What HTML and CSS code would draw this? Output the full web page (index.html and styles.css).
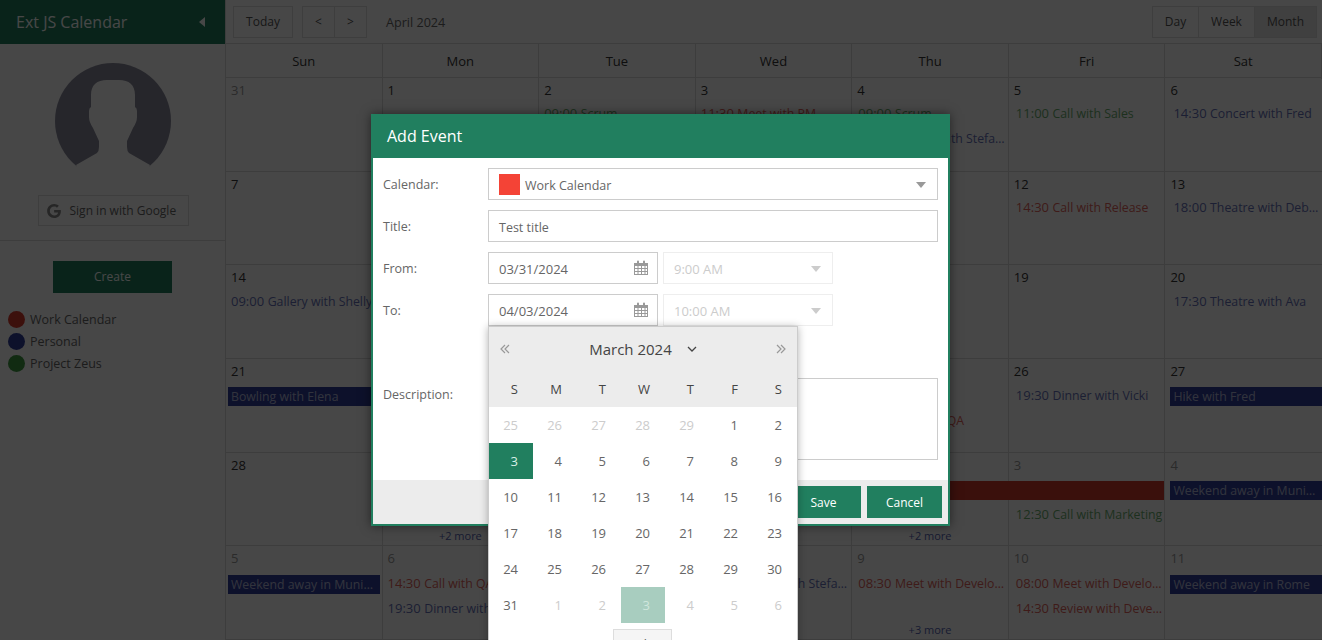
FILE: index.html

```html
<!DOCTYPE html>
<html>
<head>
<title>Ext JS Calendar</title>
<meta name="viewport" content="width=device-width, initial-scale=1">
<link rel="stylesheet" href="styles.css">
</head>
<body>
<div class="app">
  <aside class="sidebar">
    <div class="brand">
      <span>Ext JS Calendar</span>
      <i class="collapse"></i>
    </div>
    <div class="profile">
      <svg class="avatar" viewBox="0 0 116 116" width="116" height="116">
        <circle cx="58" cy="58" r="58" fill="#8a8a9c"/>
        <path fill="#fff" d="M21 102L42 90Q44 88 44 84V78L38 65Q34 59 34 54V48Q34 45 36 44V32C36 22 42 17 52 17H64C74 17 80 22 80 32V44Q82 45 82 48V54Q82 59 78 65L72 78V84Q72 88 74 90L95 102L88 116H28Z"/>
      </svg>
      <button class="google">
        <svg viewBox="0 0 24 24" width="14" height="14"><path fill="#888" d="M12.24 10.285V14.4h6.806c-.275 1.765-2.056 5.174-6.806 5.174-4.095 0-7.439-3.389-7.439-7.574s3.345-7.574 7.439-7.574c2.33 0 3.891.989 4.785 1.849l3.254-3.138C18.189 1.186 15.479 0 12.24 0c-6.635 0-12 5.365-12 12s5.365 12 12 12c6.926 0 11.52-4.869 11.52-11.726 0-.788-.085-1.39-.189-1.989H12.24z"/></svg>
        Sign in with Google
      </button>
    </div>
    <div class="side-actions">
      <button class="create">Create</button>
    </div>
    <ul class="legend">
      <li><i class="dot red"></i>Work Calendar</li>
      <li><i class="dot blue"></i>Personal</li>
      <li><i class="dot green"></i>Project Zeus</li>
    </ul>
  </aside>

  <main class="calendar">
    <div class="toolbar">
      <button class="tool today">Today</button>
      <div class="group">
        <button class="tool nav">&lt;</button>
        <button class="tool nav">&gt;</button>
      </div>
      <span class="period">April 2024</span>
      <div class="group views">
        <button class="tool day">Day</button>
        <button class="tool week">Week</button>
        <button class="tool month active">Month</button>
      </div>
    </div>

    <div class="days">
      <div>Sun</div><div>Mon</div><div>Tue</div><div>Wed</div><div>Thu</div><div>Fri</div><div>Sat</div>
    </div>

    <div class="weeks">
      <div class="cell other"><div class="num">31</div></div>
      <div class="cell"><div class="num">1</div></div>
      <div class="cell"><div class="num">2</div><div class="ev c-green"><b>09:00</b>Scrum</div></div>
      <div class="cell"><div class="num">3</div><div class="ev c-red"><b>11:30</b>Meet with PM</div></div>
      <div class="cell"><div class="num">4</div><div class="ev c-green"><b>09:00</b>Scrum</div><div class="ev c-blue"><b>15:00</b>Review with Stefanie</div></div>
      <div class="cell"><div class="num">5</div><div class="ev c-green"><b>11:00</b>Call with Sales</div></div>
      <div class="cell"><div class="num">6</div><div class="ev c-blue"><b>14:30</b>Concert with Fred</div></div>

      <div class="cell"><div class="num">7</div></div>
      <div class="cell"><div class="num">8</div></div>
      <div class="cell"><div class="num">9</div></div>
      <div class="cell"><div class="num">10</div></div>
      <div class="cell"><div class="num">11</div></div>
      <div class="cell"><div class="num">12</div><div class="ev c-red"><b>14:30</b>Call with Release</div></div>
      <div class="cell"><div class="num">13</div><div class="ev c-blue"><b>18:00</b>Theatre with Deborah</div></div>

      <div class="cell"><div class="num">14</div><div class="ev c-blue"><b>09:00</b>Gallery with Shelly</div></div>
      <div class="cell"><div class="num">15</div></div>
      <div class="cell"><div class="num">16</div></div>
      <div class="cell"><div class="num">17</div></div>
      <div class="cell"><div class="num">18</div></div>
      <div class="cell"><div class="num">19</div></div>
      <div class="cell"><div class="num">20</div><div class="ev c-blue"><b>17:30</b>Theatre with Ava</div></div>

      <div class="cell"><div class="num">21</div><div class="bar b-blue join-right">Bowling with Elena</div></div>
      <div class="cell"><div class="num">22</div></div>
      <div class="cell"><div class="num">23</div></div>
      <div class="cell"><div class="num">24</div></div>
      <div class="cell"><div class="num">25</div><div class="ev"></div><div class="ev c-red"><b>14:30</b>Call with QA</div></div>
      <div class="cell"><div class="num">26</div><div class="ev c-blue"><b>19:30</b>Dinner with Vicki</div></div>
      <div class="cell"><div class="num">27</div><div class="bar b-blue">Hike with Fred</div></div>

      <div class="cell"><div class="num">28</div></div>
      <div class="cell"><div class="num">29</div><div class="more">+2 more</div></div>
      <div class="cell"><div class="num">30</div></div>
      <div class="cell other"><div class="num">1</div></div>
      <div class="cell other"><div class="num">2</div><div class="bar b-red join-right"></div><div class="more">+2 more</div></div>
      <div class="cell other"><div class="num">3</div><div class="bar b-red join-left"></div><div class="ev c-green"><b>12:30</b>Call with Marketing</div></div>
      <div class="cell other"><div class="num">4</div><div class="bar b-blue">Weekend away in Munich</div></div>

      <div class="cell other"><div class="num">5</div><div class="bar b-blue">Weekend away in Munich</div></div>
      <div class="cell other"><div class="num">6</div><div class="ev c-red"><b>14:30</b>Call with QA</div><div class="ev c-blue"><b>19:30</b>Dinner with Vicki</div></div>
      <div class="cell other"><div class="num">7</div></div>
      <div class="cell other"><div class="num">8</div><div class="ev c-blue"><b>15:00</b>Review with Stefanie</div></div>
      <div class="cell other"><div class="num">9</div><div class="ev c-red"><b>08:30</b>Meet with Developers</div><div class="more">+3 more</div></div>
      <div class="cell other"><div class="num">10</div><div class="ev c-red"><b>08:00</b>Meet with Developers</div><div class="ev c-red"><b>14:30</b>Review with Developers</div></div>
      <div class="cell other"><div class="num">11</div><div class="bar b-blue">Weekend away in Rome</div></div>
    </div>
  </main>
</div>

<div class="mask"></div>

<div class="modal">
  <div class="modal-head">Add Event</div>
  <div class="modal-body">
    <label>Calendar:</label>
    <div class="field"><i class="swatch"></i>Work Calendar<i class="caret"></i></div>

    <label>Title:</label>
    <div class="field">Test title</div>

    <label>From:</label>
    <div class="pair">
      <div class="field date">03/31/2024
        <svg class="cal-icon" viewBox="0 0 16 16" width="16" height="16"><use href="#cal"/></svg>
      </div>
      <div class="field time">9:00 AM<i class="caret"></i></div>
    </div>

    <label>To:</label>
    <div class="pair">
      <div class="field date">04/03/2024
        <svg class="cal-icon" viewBox="0 0 16 16" width="16" height="16"><use href="#cal"/></svg>
        <div class="picker">
          <div class="picker-head">
            <div class="picker-title">
              <svg class="dbl" viewBox="0 0 10 10" width="10" height="10"><path d="M5 1L1 5l4 4M9 1L5 5l4 4"/></svg>
              <span class="picker-month">March 2024
                <svg class="chev" viewBox="0 0 10 10" width="10" height="10"><path d="M1 3l4 4 4-4"/></svg>
              </span>
              <svg class="dbl" viewBox="0 0 10 10" width="10" height="10"><path d="M1 1l4 4-4 4M5 1l4 4-4 4"/></svg>
            </div>
            <div class="dow"><span>S</span><span>M</span><span>T</span><span>W</span><span>T</span><span>F</span><span>S</span></div>
          </div>
          <div class="dates">
            <span class="off">25</span><span class="off">26</span><span class="off">27</span><span class="off">28</span><span class="off">29</span><span>1</span><span>2</span>
            <span class="sel">3</span><span>4</span><span>5</span><span>6</span><span>7</span><span>8</span><span>9</span>
            <span>10</span><span>11</span><span>12</span><span>13</span><span>14</span><span>15</span><span>16</span>
            <span>17</span><span>18</span><span>19</span><span>20</span><span>21</span><span>22</span><span>23</span>
            <span>24</span><span>25</span><span>26</span><span>27</span><span>28</span><span>29</span><span>30</span>
            <span>31</span><span class="off">1</span><span class="off">2</span><span class="now">3</span><span class="off">4</span><span class="off">5</span><span class="off">6</span>
          </div>
          <button class="picker-today">Today</button>
        </div>
      </div>
      <div class="field time">10:00 AM<i class="caret"></i></div>
    </div>

    <label></label>
    <div class="spacer"></div>

    <label>Description:</label>
    <div class="field area"></div>
  </div>
  <div class="modal-foot">
    <button class="action">Save</button>
    <button class="action">Cancel</button>
  </div>
</div>

<svg class="defs" width="0" height="0">
  <symbol id="cal" viewBox="0 0 16 16">
    <path fill="#999" d="M1 3h3V1.500a1 1 0 0 1 2 0V3h4V1.500a1 1 0 0 1 2 0V3h3v12H1z"/>
    <path fill="#fff" d="M2 6h2.500v2H2zM5.500 6H8v2H5.500zM9 6h2.500v2H9zM12.500 6H14v2h-1.500zM2 9h2.500v2H2zM5.500 9H8v2H5.500zM9 9h2.500v2H9zM12.500 9H14v2h-1.500zM2 12h2.500v2H2zM5.500 12H8v2H5.500zM9 12h2.500v2H9zM12.500 12H14v2h-1.500z"/>
  </symbol>
</svg>
</body>
</html>
```

FILE: styles.css

```css
* { box-sizing: border-box; }
html, body { height: 640px; overflow: hidden; }
body { margin: 0; position: relative; font-family: "Open Sans", "Liberation Sans", sans-serif; font-size: 13px; color: #333; background-color: #fff; }
button { font-family: inherit; cursor: pointer; }
.defs { position: absolute; }

/* page under the mask */
.app { display: flex; height: 640px; }
.sidebar { width: 226px; flex: none; border-right: 1px solid #dcdcdc; background-color: #fff; }
.brand { height: 44px; padding: 0 20px 0 16px; display: flex; align-items: center; justify-content: space-between; background-color: #217f5f; color: #fff; font-size: 16px; }
.collapse { border: 5px solid transparent; border-right: 6px solid #fff; border-left: 0; }
.profile { height: 197px; padding-top: 19px; border-bottom: 1px solid #dcdcdc; display: flex; flex-direction: column; align-items: center; }
.avatar { margin-left: 1px; }
.google { margin: 16px 0 0 1px; width: 151px; height: 31px; padding: 0 0 0 8px; display: flex; align-items: center; gap: 9px; border: 1px solid #ddd; background-color: #fff; font-size: 12px; color: #666; }
.side-actions { padding-top: 20px; text-align: center; }
.create { width: 119px; height: 32px; padding: 0 0 2px; border: none; background-color: #217f5f; color: #fff; font-size: 12px; }
.legend { list-style: none; margin: 15px 0 0; padding: 0 0 0 8px; color: #666; }
.legend li { height: 22px; display: flex; align-items: center; gap: 5px; font-size: 12.500px; }
.dot { width: 17px; height: 17px; border-radius: 50%; }
.dot.red { background-color: #d83a2e; }
.dot.blue { background-color: #303e9a; }
.dot.green { background-color: #3f9a43; }

.calendar { flex: 1; min-width: 0; display: flex; flex-direction: column; }
.toolbar { height: 44px; padding: 6px 5px 0 7px; display: flex; align-items: flex-start; border-bottom: 1px solid #dcdcdc; }
.group { display: flex; }
.tool { height: 32px; padding: 0 0 2px; border: 1px solid #ddd; background-color: #fff; font-size: 12px; color: #555; }
.group .tool + .tool { margin-left: -1px; }
.today { width: 60px; margin-right: 9px; }
.nav { width: 33px; }
.period { margin-left: 19px; line-height: 34px; font-size: 12.600px; color: #666; }
.views { margin-left: auto; }
.day { width: 47px; }
.week { width: 57px; }
.month { width: 63px; }
.tool.active { background-color: #e6e6e6; }

.days { height: 34px; display: grid; grid-template-columns: repeat(7, 1fr); border-bottom: 1px solid #dcdcdc; }
.days div { line-height: 35px; text-align: center; border-right: 1px solid #dcdcdc; color: #333; }
.weeks { flex: 1; min-height: 0; display: grid; grid-template-columns: repeat(7, minmax(0, 1fr)); grid-template-rows: repeat(6, minmax(0, 1fr)); }
.cell { --inset: 2px; display: flex; flex-direction: column; min-width: 0; border-right: 1px solid #dcdcdc; border-bottom: 1px solid #dcdcdc; }
.cell:nth-child(7n-2) { --inset: 3px; }
.cell:nth-child(7n-1) { --inset: 4px; }
.cell:nth-child(7n) { --inset: 5px; border-right: 0; }
.num { height: 24px; flex: none; padding-left: 5px; line-height: 24px; color: #333; }
.cell:nth-child(-n+14) .num { height: 23px; }
.cell:nth-last-child(-n+7) .num { height: 25px; }
.other .num { color: #999; }
.ev { height: 25px; flex: none; margin-left: var(--inset); padding: 0 0 0 3px; line-height: 25px; font-size: 12.300px; white-space: nowrap; overflow: hidden; text-overflow: ellipsis; }
.ev b { font-weight: normal; font-size: 13px; margin-right: 3.500px; }
.c-red { color: #e0635a; }
.c-blue { color: #6671b8; }
.c-green { color: #6aad6e; }
.bar { height: 19px; flex: none; margin: 4px 2px 2px var(--inset); padding: 0 5px 0 3px; line-height: 19px; font-size: 12.300px; color: rgba(255, 255, 255, 0.65); white-space: nowrap; overflow: hidden; text-overflow: ellipsis; }
.cell:nth-child(7n) .bar { margin-right: 0; }
.bar.join-right { margin-right: -1px; }
.bar.join-left { margin-left: 0; margin-right: 0; }
.b-blue { background-color: #303e9a; }
.b-red { background-color: #d0392d; }
.more { margin-top: auto; margin-bottom: 2px; line-height: 14px; text-align: center; font-size: 11px; color: #5563b0; }

.mask { position: absolute; inset: 0; background-color: rgba(0, 0, 0, 0.72); }

/* add event window */
.modal { position: absolute; left: 371px; top: 114px; width: 579px; height: 412px; display: flex; flex-direction: column; border: 2px solid #217f5f; border-top: 0; background-color: #fff; box-shadow: 0 0 10px rgba(0, 0, 0, 0.5); }
.modal-head { height: 44px; flex: none; margin: 0 -2px; padding-left: 16px; line-height: 44px; background-color: #217f5f; color: #fff; font-size: 16px; }
.modal-body { flex: 1; padding: 10px 10px 0; display: grid; grid-template-columns: 105px 1fr; grid-auto-rows: min-content; row-gap: 10px; }
.modal-body label { height: 32px; line-height: 34px; font-size: 12.500px; color: #666; }
.field { position: relative; height: 32px; padding: 2px 0 0 10px; display: flex; align-items: center; border: 1px solid #ccc; background-color: #fff; font-size: 12.500px; color: #666; }
.swatch { width: 21px; height: 21px; margin: -2px 5px 0 0; background-color: #f44336; }
.caret { position: absolute; right: 11px; top: 13px; border: 5px solid transparent; border-top: 6px solid #999; border-bottom: 0; }
.pair { display: flex; gap: 5px; }
.date { width: 170px; font-size: 13px; }
.time { width: 170px; border-color: #eee; font-size: 13px; color: #ccc; }
.time .caret { border-top-color: #ccc; }
.cal-icon { position: absolute; right: 8px; top: 7px; }
.spacer { height: 32px; }
.area { height: 82px; }
.modal-foot { height: 44px; flex: none; padding: 6px 6px 0 0; display: flex; justify-content: flex-end; gap: 6px; background-color: #ececec; }
.action { width: 75px; height: 32px; border: none; background-color: #217f5f; color: #fff; font-size: 12px; }

/* date picker */
.picker { position: absolute; left: -1px; top: 31px; width: 310px; height: 340px; border: 1px solid #ccc; border-bottom: 0; background-color: #fff; box-shadow: 0 1px 8px rgba(0, 0, 0, 0.3); font-size: 13px; z-index: 2; }
.picker-head { height: 80px; background-color: #ececec; }
.picker-title { height: 44px; padding: 0 11px; display: flex; align-items: center; justify-content: space-between; }
.picker-month { display: flex; align-items: center; gap: 15px; font-size: 15px; color: #444; }
.dbl { fill: none; stroke: #999; stroke-width: 1.2; }
.chev { fill: none; stroke: #444; stroke-width: 1.3; }
.dow { display: grid; grid-template-columns: repeat(7, 44px); }
.dow span { padding-right: 15px; line-height: 36px; text-align: right; color: #444; }
.dates { display: grid; grid-template-columns: repeat(7, 44px); grid-auto-rows: 36px; }
.dates span { padding-right: 15px; line-height: 36px; text-align: right; color: #666; }
.dates .off { color: #ccc; }
.dates .sel { background-color: #217f5f; color: #d8efe6; }
.dates .now { background-color: #a8cdbf; color: #cfe6dc; }
.picker-today { display: block; margin: 6px 0 0 124px; width: 59px; height: 30px; border: 1px solid #ddd; background-color: #f5f5f5; font-size: 12px; color: #555; }
```
